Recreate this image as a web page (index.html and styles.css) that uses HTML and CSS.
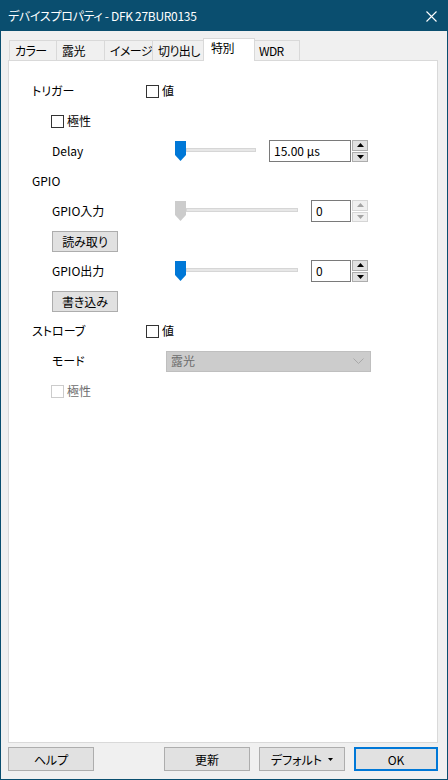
FILE: index.html
```html
<!DOCTYPE html>
<html lang="ja">
<head>
    <meta charset="UTF-8">
    <meta name="viewport" content="width=device-width, initial-scale=1.0">
    <link rel="stylesheet" href="styles.css">
</head>
<body>
    <div class="window">
        <div class="titlebar">
            <span class="title">デバイスプロパティ - DFK 27BUR0135</span>
            <svg class="close" width="11" height="11" viewBox="0 0 11 11">
                <path d="M0.5 0.5 L10.5 10.5 M10.5 0.5 L0.5 10.5" stroke="#fff" stroke-width="1.1" fill="none"/>
            </svg>
        </div>

        <div class="client">
            <div class="tabs">
                <div class="tab t1">カラー</div>
                <div class="tab t2">露光</div>
                <div class="tab t3">イメージ</div>
                <div class="tab t4">切り出し</div>
                <div class="tab t5 active">特別</div>
                <div class="tab t6">WDR</div>
            </div>

            <div class="panel">
                <!-- trigger -->
                <div class="row">
                    <span class="lbl">トリガー</span>
                    <label class="check"><span class="box"></span>値</label>
                </div>
                <div class="row sub">
                    <label class="check first"><span class="box"></span>極性</label>
                </div>
                <div class="row sub">
                    <span class="lbl wide">Delay</span>
                    <div class="slider short">
                        <svg class="thumb" width="11" height="20" viewBox="0 0 11 20"><path d="M0 0 H11 V14 L5.5 20 L0 14 Z" fill="#0078d7"/></svg>
                        <div class="track"></div>
                    </div>
                    <div class="num long">15.00 µs</div>
                    <div class="spin">
                        <div class="arrow"><svg width="7" height="4" viewBox="0 0 7 4"><path d="M0 4 L3.5 0 L7 4 Z" fill="#000"/></svg></div>
                        <div class="arrow"><svg width="7" height="4" viewBox="0 0 7 4"><path d="M0 0 L3.5 4 L7 0 Z" fill="#000"/></svg></div>
                    </div>
                </div>

                <!-- gpio -->
                <div class="row">
                    <span class="lbl">GPIO</span>
                </div>
                <div class="row sub">
                    <span class="lbl wide">GPIO入力</span>
                    <div class="slider">
                        <svg class="thumb" width="11" height="20" viewBox="0 0 11 20"><path d="M0 0 H11 V14 L5.5 20 L0 14 Z" fill="#cccccc"/></svg>
                        <div class="track"></div>
                    </div>
                    <div class="num">0</div>
                    <div class="spin disabled">
                        <div class="arrow"><svg width="7" height="4" viewBox="0 0 7 4"><path d="M0 4 L3.5 0 L7 4 Z" fill="#a3a3a3"/></svg></div>
                        <div class="arrow"><svg width="7" height="4" viewBox="0 0 7 4"><path d="M0 0 L3.5 4 L7 0 Z" fill="#a3a3a3"/></svg></div>
                    </div>
                </div>
                <div class="row sub">
                    <button class="btn small">読み取り</button>
                </div>
                <div class="row sub">
                    <span class="lbl wide">GPIO出力</span>
                    <div class="slider">
                        <svg class="thumb" width="11" height="20" viewBox="0 0 11 20"><path d="M0 0 H11 V14 L5.5 20 L0 14 Z" fill="#0078d7"/></svg>
                        <div class="track"></div>
                    </div>
                    <div class="num">0</div>
                    <div class="spin">
                        <div class="arrow"><svg width="7" height="4" viewBox="0 0 7 4"><path d="M0 4 L3.5 0 L7 4 Z" fill="#000"/></svg></div>
                        <div class="arrow"><svg width="7" height="4" viewBox="0 0 7 4"><path d="M0 0 L3.5 4 L7 0 Z" fill="#000"/></svg></div>
                    </div>
                </div>
                <div class="row sub">
                    <button class="btn small">書き込み</button>
                </div>

                <!-- strobe -->
                <div class="row">
                    <span class="lbl">ストローブ</span>
                    <label class="check"><span class="box"></span>値</label>
                </div>
                <div class="row sub">
                    <span class="lbl mid">モード</span>
                    <div class="select">
                        <span>露光</span>
                        <svg width="11" height="6" viewBox="0 0 11 6"><path d="M0.5 0.5 L5.5 5.5 L10.5 0.5" stroke="#a8a8a8" fill="none"/></svg>
                    </div>
                </div>
                <div class="row sub">
                    <label class="check first off"><span class="box"></span>極性</label>
                </div>
            </div>

            <div class="actions">
                <button class="btn act">ヘルプ</button>
                <button class="btn act push">更新</button>
                <button class="btn act">デフォルト<svg class="caret" width="5" height="3" viewBox="0 0 5 3"><path d="M0 0 H5 L2.5 3 Z" fill="#000"/></svg></button>
                <button class="btn act ok">OK</button>
            </div>
        </div>
    </div>
</body>
</html>
```

FILE: styles.css
```css
* {
    box-sizing: border-box;
}
body {
    margin: 0;
    font-family: "Noto Sans CJK JP", "Noto Sans", sans-serif;
    font-size: 12px;
    line-height: 16px;
    font-feature-settings: "palt";
    color: #000;
}
.window {
    width: 448px;
    height: 780px;
    border: 1px solid #0a4e6f;
    display: flex;
    flex-direction: column;
    background-color: #f0f0f0;
}
.titlebar {
    height: 30px;
    background-color: #0a4e6f;
    color: #fff;
    display: flex;
    align-items: center;
    padding: 0 10px 0 7px;
}
.title {
    flex: 1;
    font-size: 12px;
    letter-spacing: -0.3px;
}
.client {
    flex: 1;
    display: flex;
    flex-direction: column;
    padding: 7px 9px 8px 7px;
}

/* tabs */
.tabs {
    height: 22px;
    display: flex;
    align-items: flex-end;
    padding-left: 1px;
}
.tab {
    height: 20px;
    border: 1px solid #d9d9d9;
    border-bottom: none;
    background-color: #f0f0f0;
    padding-left: 5px;
    line-height: 19px;
    margin-left: -1px;
    white-space: nowrap;
    overflow: hidden;
    letter-spacing: -0.6px;
}
.t1 { width: 48px; margin-left: 0; }
.t2 { width: 49px; }
.t3 { width: 49px; }
.t4 { width: 54px; }
.t5 { width: 52px; }
.t6 { width: 47px; margin-left: -2px; }
.tab.active {
    height: 23px;
    margin-left: -3px;
    margin-bottom: -1px;
    background-color: #fff;
    padding-left: 7px;
    line-height: 18px;
    position: relative;
    z-index: 1;
}

/* panel */
.panel {
    flex: 1;
    background-color: #fff;
    border: 1px solid #d9d9d9;
    padding-top: 15px;
}
.row {
    height: 30px;
    display: flex;
    align-items: center;
    padding-left: 23px;
    white-space: nowrap;
}
.row.sub {
    padding-left: 43px;
}
.lbl {
    width: 114px;
}
.lbl.wide {
    width: 123px;
}
.lbl.mid {
    width: 114px;
}
.check {
    display: flex;
    align-items: center;
    gap: 3px;
}
.check.first {
    margin-left: -1px;
}
.box {
    width: 13px;
    height: 13px;
    border: 1px solid #333;
    background-color: #fff;
}
.check.off {
    color: #6d6d6d;
}
.check.off .box {
    border-color: #cccccc;
}

/* slider */
.slider {
    width: 123px;
    height: 20px;
    display: flex;
    align-items: flex-start;
    margin-right: 13px;
}
.slider.short {
    width: 81px;
}
.thumb {
    flex: none;
    display: block;
}
.track {
    flex: 1;
    height: 4px;
    margin-top: 7px;
    background-color: #e7e7e7;
    border: 1px solid #d6d6d6;
}

/* spinner */
.num {
    width: 40px;
    height: 22px;
    border: 1px solid #7a7a7a;
    background-color: #fff;
    padding-left: 4px;
    line-height: 20px;
}
.num.long {
    width: 82px;
}
.spin {
    width: 16px;
    height: 22px;
    margin-left: 1px;
    display: flex;
    flex-direction: column;
    gap: 1px;
}
.arrow {
    flex: 1;
    background-color: #e1e1e1;
    border: 1px solid #adadad;
    display: flex;
    align-items: center;
    justify-content: center;
}
.spin.disabled .arrow {
    background-color: #f0f0f0;
    border-color: #d6d6d6;
}

/* buttons */
.btn {
    font-family: "Noto Sans CJK JP", "Noto Sans", sans-serif;
    font-size: 12px;
    font-feature-settings: "palt";
    color: #000;
    background-color: #e1e1e1;
    border: 1px solid #adadad;
    padding: 0;
    display: flex;
    align-items: center;
    justify-content: center;
}
.btn.small {
    width: 66px;
    height: 21px;
}

/* select */
.select {
    width: 205px;
    height: 21px;
    background-color: #cccccc;
    border: 1px solid #bfbfbf;
    color: #6d6d6d;
    display: flex;
    align-items: center;
    justify-content: space-between;
    padding: 0 6px 0 4px;
}

/* bottom bar */
.actions {
    height: 24px;
    margin-top: 4px;
    display: flex;
    gap: 9px;
}
.btn.act {
    width: 86px;
    height: 24px;
}
.btn.push {
    margin-left: auto;
}
.btn.ok {
    width: 84px;
    border: 2px solid #0078d7;
}
.caret {
    margin-left: 6px;
}
```
